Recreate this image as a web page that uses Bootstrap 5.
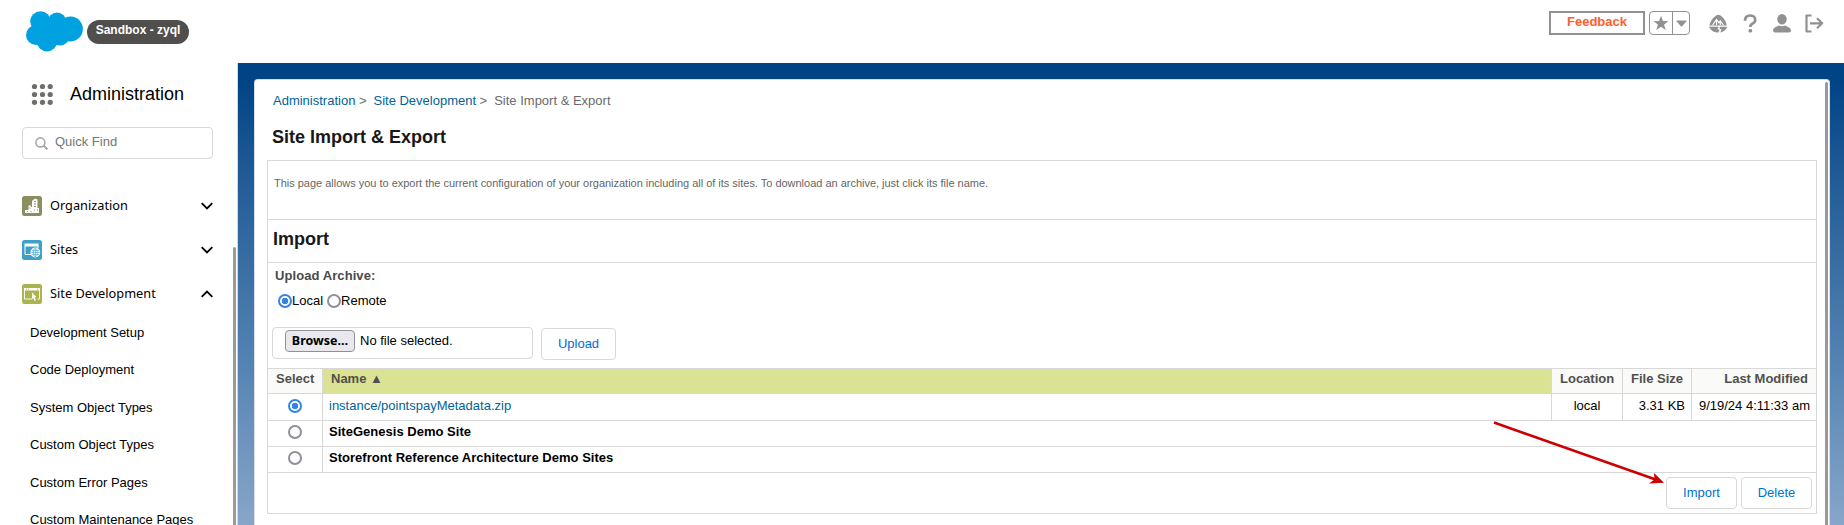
<!DOCTYPE html>
<html lang="en">
<head>
<meta charset="utf-8">
<title>Site Import &amp; Export</title>
<link rel="stylesheet" href="https://cdn.jsdelivr.net/npm/bootstrap@5.3.0/dist/css/bootstrap.min.css">
<style>
body{font:13px/16px "Liberation Sans",Arial,sans-serif;color:#000;background:#fff;height:525px;overflow:hidden}
a{color:#00639b;text-decoration:none}
.topbar{height:63px;padding:11px 20px 0 26px}
.org-badge{background:#514f4d;color:#fff;font:bold 12px/24px "Liberation Sans",sans-serif;height:24px;width:102px;border-radius:12px;margin:9px 0 0 4px;text-align:center}
.org-badge span{display:block;margin-top:-2px}
.feedback{width:96px;height:24px;border:2px solid #919191;color:#ff5d2d;font-weight:bold;text-align:center;line-height:17px}
.fav{width:41px;height:24px;border:1px solid #919191;border-radius:4px;margin-left:4px}
.fav svg:first-child{border-right:1px solid #919191}
.tools{margin:3px 0 0 18px}
.body-row{height:462px}
.side{width:237px;padding-left:22px;flex:none}
.side-col{width:211px;flex:none}
.app-row{height:33px;margin-top:15px;padding-left:9px}
.app-row svg{margin-top:-1px}
.app-title{font-size:18px;line-height:22px;margin:-2px 0 0 17px}
.find{width:191px;height:32px;margin:16px 0 37px;border:1px solid #d8d8d8;border-radius:4px;color:#757575;padding:0 0 3px 12px;gap:7px}
.find svg{margin-top:3px}
.menu-head{height:20px;margin-bottom:24px;width:191px;font:12.75px/19px "Noto Sans","Open Sans",sans-serif}
.menu-sub{padding-left:8px}
.menu-sub li{height:37.4px}
.track i{display:block;width:3px;height:300px;background:#999b9b;border-radius:2px 2px 0 0;margin-top:184px}
.stage{background:linear-gradient(#014486 0,#014486 20px,#1f5a95 107px,#5080b0 285px,#87a6c9 462px);border-left:1px solid #d3d7db;padding:16px 14px 0 16px}
.panel{background:#fff;border:1px solid #d8dde6;border-bottom:0;border-radius:4px 4px 0 0;height:446px}
.thumb{width:3px;background:#999;border-radius:2px 2px 0 0;margin:2px 1px 0 0}
.work{padding:0 8px 0 12px;width:1570px}
.crumbs{height:20px;margin:13px 0 0 6px;color:#6a6a6a}
.crumbs i{font-style:normal;padding:0 7px 0 3.5px}
h1,h2{font-size:18px;line-height:22px;font-weight:bold;color:#181818;margin:0}
h1{margin:13px 0 0 5px}
.sheet{border:1px solid #d8d8d8;width:1550px;height:354px;margin-top:12px}
.about{height:59px;border-bottom:1px solid #d8d8d8;color:#666;font-size:11px;padding:14px 0 0 6px;letter-spacing:-.015px}
.sec{height:43px;border-bottom:1px solid #d8d8d8;padding:8px 0 0 5px}
.upl{height:105px;padding:5px 0 0 4px}
.upl b{color:#4a4a4a;margin-left:3px;display:block;letter-spacing:.08px}
.upl .pick{height:14px;margin:10px 0 0 6px;line-height:14px}
input[type=radio]{appearance:none;width:14px;height:14px;border:2px solid #8f8f9d;border-radius:50%;margin:0;display:block;flex:none;background:#fff}
input[type=radio]:checked{border-color:#3584e4;background:radial-gradient(#3584e4 0 2.9px,#fff 3.6px)}
.picker{margin-top:19px}
.filebox{width:261px;height:32px;border:1px solid #d8d8d8;border-radius:4px;padding:2px 0 0 12px}
.browse{width:70px;height:22px;border:1px solid #8f8f9d;border-radius:4px;background:#e9e9ed;font:bold 12.5px/20px "Noto Sans","Open Sans",sans-serif;text-align:center}
.act{height:32px;width:71px;border:1px solid #d8d8d8;border-radius:4px;color:#0070d2;background:#fff;padding:0;text-align:center;font:13px/28px "Liberation Sans",sans-serif}
.act.up{width:75px;margin:1px 0 0 8px}
.files{table-layout:fixed;width:1548px;border-collapse:separate;border-spacing:0;border-top:1px solid #d8d8d8}
.files th,.files td{border-bottom:1px solid #d8d8d8;border-right:1px solid #d8d8d8;padding:0 6px;vertical-align:top;white-space:nowrap}
.files tr>:last-child{border-right:0}
.files th{height:25px;background:#fafaf9;color:#514f4d;padding:2px 8px 0}
.files th.sorted{background:#dbe294}
.files td{height:26px;padding-top:3px}
.files .r1 td{height:27px;padding-top:4px}
.files td input{margin:1px auto 0}
.files td b{letter-spacing:.02px}
.acts{gap:4px;padding:4px 4px 0 0}
.pointer{position:absolute;left:1490px;top:416px}
</style>
</head>
<body>
<header class="topbar d-flex align-items-start">
  <svg width="57" height="41" viewBox="0 0 57 41" fill="#00a1e0"><circle cx="14.500" cy="10.500" r="10.300"/><circle cx="31" cy="10.800" r="9.300"/><circle cx="44.500" cy="18" r="12.400"/><circle cx="10" cy="24" r="10"/><circle cx="21" cy="30" r="10.400"/><circle cx="34" cy="25" r="9.600"/><rect x="10" y="9" width="30" height="20"/></svg>
  <div class="org-badge"><span>Sandbox - zyql</span></div>
  <div class="feedback ms-auto">Feedback</div>
  <div class="fav d-flex">
    <svg width="23" height="22" viewBox="0 0 23 22" fill="#919191"><path d="M11.500 3.500l2 5.500 5.800.1-4.600 3.500 1.700 5.800-4.900-3.400-4.900 3.400 1.700-5.800-4.600-3.500 5.800-.1z"/></svg>
    <svg width="16" height="22" viewBox="0 0 16 22" fill="#919191"><path d="M4 8.500h9q.8.300.3.900l-4.200 4.800q-.6.500-1.200 0L3.700 9.400q-.5-.6.300-.9z"/></svg>
  </div>
  <svg width="116" height="20" viewBox="0 0 116 20" class="tools" fill="#919191">
    <path d="M1.300 11.500Q3 4.500 8.500 1.200q2-1 3.600 0 5.500 3.300 6.700 10.300z"/>
    <path d="M4.500 11.300l4-5.800 2.300 3.300 1.500-2 3.200 4.500M8.500 6v5M12.300 8v3" fill="none" stroke="#fff" stroke-width="1.100"/>
    <path d="M.8 12.700h9.200l.6 1.300-1.500 1 2.400 1-1 2.600Q4.300 18.900.8 12.700zM12 12.700h7.300q-2 4.600-6.900 5.800l1-2.900-2-1z"/>
    <path d="M37 6.800q0-5.300 5.200-5.300t5 4.600q0 2.100-2.400 3.300-2.500 1.100-2.500 3.600" fill="none" stroke="#919191" stroke-width="2.700"/><rect x="40.600" y="15" width="3.500" height="3.500" rx="1.200"/>
    <ellipse cx="74" cy="5.300" rx="4.700" ry="5.200"/><path d="M65 16.200q0-2.300 6-4.700 3 1.500 6 0 6 2.400 6 4.700 0 2.300-2 2.300H67q-2 0-2-2.300z"/>
    <path d="M103.500 1.500h-5v16h5M102 9.300h11M109 4.300l5.200 5-5.200 5" fill="none" stroke="#919191" stroke-width="2.200" stroke-linejoin="round"/>
  </svg>
</header>
<div class="body-row d-flex">
  <aside class="side d-flex">
    <div class="side-col">
      <div class="app-row d-flex align-items-center">
        <svg width="22" height="22" viewBox="0 0 22 22" fill="#706e6b"><circle cx="3.500" cy="3.500" r="2.600"/><circle cx="11.500" cy="3.500" r="2.600"/><circle cx="19.200" cy="3.500" r="2.600"/><circle cx="3.500" cy="11.500" r="2.600"/><circle cx="11.500" cy="11.500" r="2.600"/><circle cx="19.200" cy="11.500" r="2.600"/><circle cx="3.500" cy="19.300" r="2.600"/><circle cx="11.500" cy="19.300" r="2.600"/><circle cx="19.200" cy="19.300" r="2.600"/></svg>
        <div class="app-title">Administration</div>
      </div>
      <div class="find d-flex align-items-center">
        <svg width="13" height="13" viewBox="0 0 13 13" fill="none" stroke="#a8a8a8" stroke-width="1.600"><circle cx="5.400" cy="5.400" r="4.500"/><path d="M8.700 8.700l3.700 3.700" stroke-width="2"/></svg>
        <span>Quick Find</span>
      </div>
      <div class="menu-head d-flex">
        <svg width="20" height="20"><rect width="20" height="20" rx="2.500" fill="#8b8f5e"/><path d="M3 17v-3h3.500v-4.500H9V11h1V5l3-2.500 2.500 1V12H17v5z" fill="#fff"/><path d="M12 5.500h2M12 8h2M12 10.500h2M12 14h1M15 14h1M7.500 12h1M5 15.500h1M8.500 15.500h1" stroke="#8b8f5e"/></svg>
        <span class="ms-2">Organization</span>
        <svg class="ms-auto" width="12" height="20"><path d="M.7 7.200L6 12.500l5.300-5.300" fill="none" stroke="#000" stroke-width="1.800"/></svg>
      </div>
      <div class="menu-head d-flex">
        <svg width="20" height="20"><rect width="20" height="20" rx="2.500" fill="#3e9fc8"/><path d="M2.500 3.500h14v3h-14z" fill="#fff"/><path d="M3 6v8.500h6M16 6v2" fill="none" stroke="#fff"/><circle cx="13.300" cy="12.500" r="4.900" fill="#fff"/><g fill="none" stroke="#3e9fc8" stroke-width=".6"><ellipse cx="13.300" cy="12.500" rx="2" ry="4.200"/><path d="M9 12.500h8.600M9.600 10.500h7.400M9.600 14.500h7.400M13.300 8v9"/></g></svg>
        <span class="ms-2">Sites</span>
        <svg class="ms-auto" width="12" height="20"><path d="M.7 7.200L6 12.500l5.300-5.300" fill="none" stroke="#000" stroke-width="1.800"/></svg>
      </div>
      <div class="menu-head d-flex" style="margin-bottom:21px">
        <svg width="20" height="20"><rect width="20" height="20" rx="2.500" fill="#abb54f"/><path d="M2 4h16v2.500H2z" fill="#fff"/><path d="M4 5.200h1M6 5.200h1M15 5.200h1" stroke="#abb54f"/><path d="M2.500 6v9H10M17.500 6v9h-2" fill="none" stroke="#fff" stroke-width=".9"/><path d="M10 8.500l4.500 4.500-2 .2 1.500 3-1.300.7-1.400-3-1.300 1.300z" fill="#fff"/></svg>
        <span class="ms-2">Site Development</span>
        <svg class="ms-auto" width="12" height="20"><path d="M.7 12.800L6 7.500l5.300 5.300" fill="none" stroke="#000" stroke-width="1.800"/></svg>
      </div>
      <ul class="list-unstyled menu-sub">
        <li>Development Setup</li><li>Code Deployment</li><li>System Object Types</li><li>Custom Object Types</li><li>Custom Error Pages</li><li>Custom Maintenance Pages</li>
      </ul>
    </div>
    <div class="track"><i></i></div>
  </aside>
  <main class="stage flex-grow-1">
    <div class="panel d-flex">
      <div class="work">
        <div class="crumbs"><a href="#">Administration</a><i>&gt;</i><a href="#">Site Development</a><i>&gt;</i>Site Import &amp; Export</div>
        <h1>Site Import &amp; Export</h1>
        <div class="sheet">
          <div class="about">This page allows you to export the current configuration of your organization including all of its sites. To download an archive, just click its file name.</div>
          <div class="sec"><h2>Import</h2></div>
          <div class="upl">
            <b>Upload Archive:</b>
            <div class="pick d-flex"><input type="radio" name="src" checked><label>Local</label><input type="radio" name="src" class="ms-1"><label>Remote</label></div>
            <div class="picker d-flex align-items-start">
              <div class="filebox d-flex"><div class="browse">Browse…</div><span style="margin:3px 0 0 5px">No file selected.</span></div>
              <button class="act up">Upload</button>
            </div>
          </div>
          <table class="files">
            <colgroup><col style="width:55px"><col><col style="width:71px"><col style="width:69px"><col style="width:124px"></colgroup>
            <tr><th>Select</th><th class="sorted">Name ▲</th><th>Location</th><th>File Size</th><th class="text-end">Last Modified</th></tr>
            <tr class="r1"><td><input type="radio" name="f" checked></td><td><a href="#">instance/pointspayMetadata.zip</a></td><td class="text-center">local</td><td class="text-end">3.31 KB</td><td class="text-end">9/19/24 4:11:33 am</td></tr>
            <tr><td><input type="radio" name="f"></td><td colspan="4"><b>SiteGenesis Demo Site</b></td></tr>
            <tr><td><input type="radio" name="f"></td><td colspan="4"><b>Storefront Reference Architecture Demo Sites</b></td></tr>
          </table>
          <div class="acts d-flex justify-content-end"><button class="act">Import</button><button class="act">Delete</button></div>
        </div>
      </div>
      <div class="thumb ms-auto"></div>
    </div>
  </main>
</div>
<svg class="pointer" width="180" height="75"><path d="M4 6.500L167 64" stroke="#c00" stroke-width="2.600"/><path d="M174 66.700l-15 .8 5.500-4L164 57z" fill="#c00"/></svg>
<script src="https://cdn.jsdelivr.net/npm/bootstrap@5.3.0/dist/js/bootstrap.bundle.min.js"></script>
</body>
</html>
